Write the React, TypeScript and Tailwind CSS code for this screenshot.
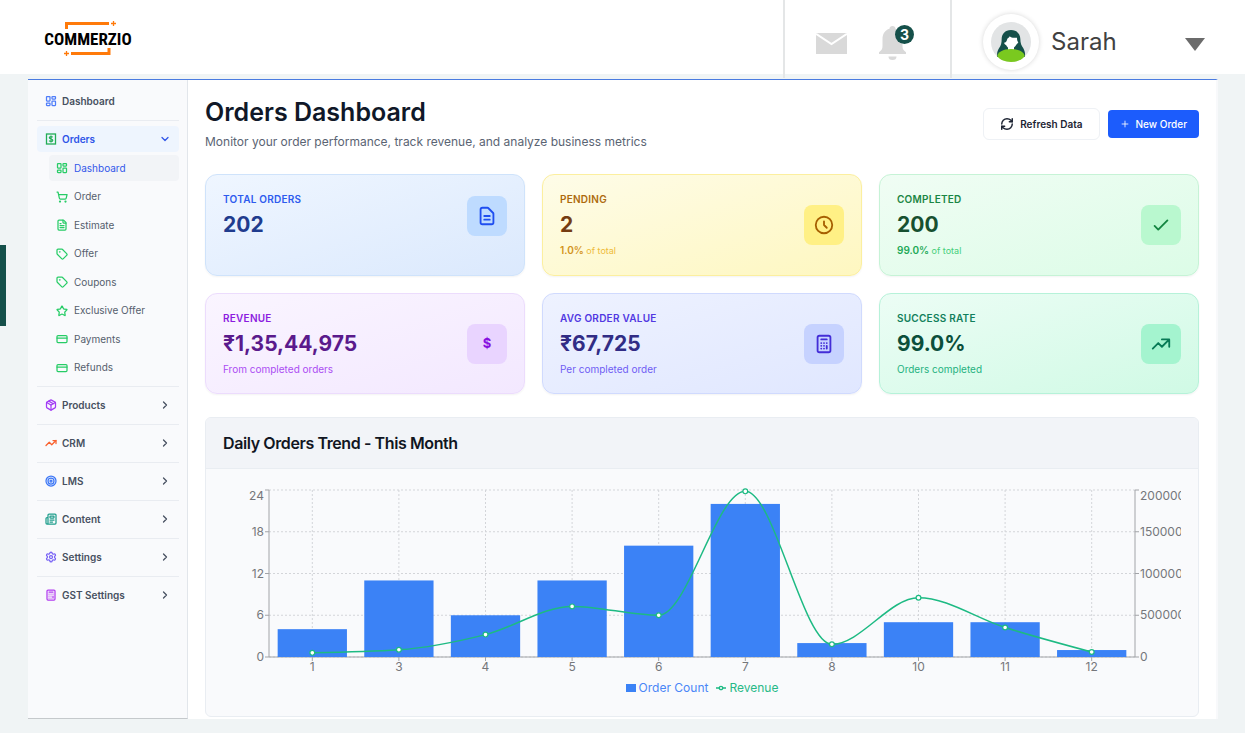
import React from "react";
import {
  Calculator,
  ChevronDown,
  ChevronRight,
  CreditCard,
  FileText,
  LayoutDashboard,
  Newspaper,
  Package,
  Plus,
  RefreshCw,
  Settings,
  ShoppingCart,
  Star,
  Tag,
  Target,
  TrendingUp,
} from "lucide-react";

type IconType = React.ComponentType<{ className?: string }>;

function DollarNote({ className }: { className?: string }) {
  return (
    <svg viewBox="0 0 24 24" className={className} fill="none" stroke="currentColor" aria-hidden="true">
      <rect x="3" y="2" width="18" height="20" strokeWidth="2.6" />
      <path d="M15.5 8.5c-.8-1-2-1.4-3.5-1.4-2 0-3.4.8-3.4 2.4 0 3.4 7 1.6 7 5 0 1.600-1.500 2.500-3.600 2.500-1.600 0-3-.5-3.800-1.600M12 5v14" strokeWidth="2.400" />
    </svg>
  );
}

const subItems: { label: string; icon: IconType; active?: boolean }[] = [
  { label: "Dashboard", icon: LayoutDashboard, active: true },
  { label: "Order", icon: ShoppingCart },
  { label: "Estimate", icon: FileText },
  { label: "Offer", icon: Tag },
  { label: "Coupons", icon: Tag },
  { label: "Exclusive Offer", icon: Star },
  { label: "Payments", icon: CreditCard },
  { label: "Refunds", icon: CreditCard },
];

const groups: { label: string; icon: IconType; color: string }[] = [
  { label: "Products", icon: Package, color: "text-[#a33df5]" },
  { label: "CRM", icon: TrendingUp, color: "text-[#f8602e]" },
  { label: "LMS", icon: Target, color: "text-[#3b76f6]" },
  { label: "Content", icon: Newspaper, color: "text-[#1f9e8c]" },
  { label: "Settings", icon: Settings, color: "text-[#7660f5]" },
  { label: "GST Settings", icon: Calculator, color: "text-[#b23bf0]" },
];

function Sidebar() {
  return (
    <aside className="w-40 shrink-0 border-r border-b border-r-[#e2e6eb] border-b-[#c5c9cc] bg-[#f9fafc] pt-[3px] pr-2 pl-[9px]">
      <nav aria-label="Main">
        <ul className="text-[10px] font-semibold text-[#475060]">
          <li className="border-b border-[#e9ecf1] pt-[5px] pb-[6px]">
            <a href="#dashboard" className="flex h-[26px] items-center gap-[5px] px-2">
              <LayoutDashboard className="size-3 stroke-[2.5] text-[#4f7df9]" />
              Dashboard
            </a>
          </li>
          <li className="border-b border-[#e9ecf1] pt-[5px] pb-[5px]">
            <button type="button" aria-expanded="true" className="flex h-[26px] w-full items-center gap-[5px] rounded bg-[#eef5fe] px-2 text-[#2f55e8]">
              <DollarNote className="size-3 text-[#22ad56]" />
              Orders
              <ChevronDown className="ml-auto size-3 stroke-[2.5]" />
            </button>
            <ul className="mt-[3px] flex h-[226px] flex-col justify-between pl-3 font-normal text-[#555e6d]">
              {subItems.map(({ label, icon: Icon, active }) => (
                <li key={label}>
                  <a
                    href={"#" + label}
                    className={
                      active
                        ? "flex h-[26px] items-center gap-[6px] rounded bg-[#f2f4f7] px-[7px] text-[#3358ea]"
                        : "flex h-[26px] items-center gap-[6px] px-[7px]"
                    }
                  >
                    <Icon className="size-3 stroke-[2.5] text-[#27cc66]" />
                    {label}
                  </a>
                </li>
              ))}
            </ul>
          </li>
          {groups.map(({ label, icon: Icon, color }, i) => (
            <li key={label} className={i < groups.length - 1 ? "border-b border-[#e9ecf1] pt-[5px] pb-[6px]" : "pt-[5px] pb-[6px]"}>
              <button type="button" aria-expanded="false" className="flex h-[26px] w-full items-center gap-[5px] px-2">
                <Icon className={"size-3 stroke-[2.5] " + color} />
                {label}
                <ChevronRight className="ml-auto size-3 stroke-[2.5]" />
              </button>
            </li>
          ))}
        </ul>
      </nav>
    </aside>
  );
}

function Logo() {
  return (
    <a href="#home" aria-label="Commerzio home" className="flex w-[88px] flex-col items-center pt-[21px]">
      <svg width="88" height="9" viewBox="0 0 88 9" fill="none" stroke="#ff7a0a" aria-hidden="true">
        <path d="M22.500 8V2.500H65" strokeWidth="3" />
        <path d="M69.500 0v5M67 2.500h5" strokeWidth="1.300" />
      </svg>
      <span className="text-[17px] leading-[18px] font-bold text-black [font-family:'Roboto_Condensed','Liberation_Sans_Narrow',Roboto,sans-serif]">
        COMMERZIO
      </span>
      <svg width="88" height="9" viewBox="0 0 88 9" fill="none" stroke="#ff7a0a" aria-hidden="true">
        <path d="M65 0V5.500H27" strokeWidth="3" />
        <path d="M22.500 3v5M20 5.500h5" strokeWidth="1.300" />
      </svg>
    </a>
  );
}

function TopBar() {
  return (
    <header className="flex h-[74px] items-start bg-white pl-11">
      <Logo />
      <div className="ml-auto flex h-[78px] w-[167px] items-start border-l-2 border-[#e4e6e7] pl-[31px]">
        <button type="button" aria-label="Messages" className="mt-[33px]">
          <svg width="31" height="21" viewBox="0 0 31 21" aria-hidden="true">
            <rect width="31" height="21" fill="#d9d9d9" />
            <path d="M0 .8 15.500 11 31 .8" fill="none" stroke="#fff" strokeWidth="2" />
          </svg>
        </button>
        <button type="button" aria-label="Notifications" className="relative mt-[26px] ml-8">
          <svg width="27" height="34" viewBox="0 0 27 34" fill="#d9d9d9" aria-hidden="true">
            <path d="M13.500 0a3 3 0 0 1 3 2.800C21 4 23.500 8 23.500 13v7c0 3 .8 4 3.500 6.200V28H0v-1.800C2.700 24 3.500 23 3.500 20v-7c0-5 2.500-9 7-10.200A3 3 0 0 1 13.500 0Z" />
            <path d="M9.500 30.500h8a4 3.500 0 0 1-8 0Z" />
          </svg>
          <span className="absolute -top-px left-4 flex size-[19px] items-center justify-center rounded-full bg-[#15504a] text-sm font-bold text-white">3</span>
        </button>
      </div>
      <button type="button" aria-haspopup="menu" className="flex h-[78px] w-[295px] items-start border-l-2 border-[#e4e6e7] pr-10 pl-[31px]">
        <span className="mt-[14px] flex size-[56px] items-center justify-center rounded-full bg-white shadow-[0_0_5px_rgba(0,0,0,0.16)]">
          <svg width="40" height="40" viewBox="0 0 120 120" aria-hidden="true">
            <circle cx="60" cy="60" r="60" fill="#e2e4e5" />
            <path d="M60 24c-18 0-28 12-28 27 0 12-2 20-8 28-5 8-7 16-5 26h82c3-10 0-18-4-26-6-8-9-16-9-28 0-15-10-27-28-27Z" fill="#15504a" />
            <path d="M39 62c5 0 9-5 10-12 4-2 6-4 7-7 6 6 15 4 22 4 0 7 1 11 4 14-2 5-6 5-8 10-1 3-5 3-5 6v12H51V77c-2-3-4-4-6-8-2-2-5-3-6-7Z" fill="#fff" />
            <path d="M60 81c24 0 41 10 41 22-8 11-24 17-41 17s-33-6-41-17c0-12 17-22 41-22Z" fill="#7ac91f" />
          </svg>
        </span>
        <span className="mt-[26px] ml-3 text-2xl leading-8 text-[#414141]">Sarah</span>
        <svg width="20" height="13" viewBox="0 0 20 13" className="mt-[38px] ml-auto" aria-hidden="true">
          <path d="M0 0h20L10 13Z" fill="#6b6b6b" />
        </svg>
      </button>
    </header>
  );
}

const outline = {
  document:
    "M9 12h6m-6 4h6m2 5H7a2 2 0 01-2-2V5a2 2 0 012-2h5.586a1 1 0 01.707.293l5.414 5.414a1 1 0 01.293.707V19a2 2 0 01-2 2z",
  clock: "M12 8v4l3 3m6-3a9 9 0 11-18 0 9 9 0 0118 0z",
  check: "M5 13l4 4L19 7",
  calculator:
    "M9 7h6m0 10v-3m-3 3h.01M9 17h.01M9 14h.01M12 14h.01M15 11h.01M12 11h.01M9 11h.01M7 21h10a2 2 0 002-2V5a2 2 0 00-2-2H7a2 2 0 00-2 2v14a2 2 0 002 2z",
  trend: "M13 7h8m0 0v8m0-8l-8 8-4-4-6 6",
};

interface Stat {
  label: string;
  value: string;
  share?: string;
  note?: string;
  icon?: string;
  card: string;
  labelColor: string;
  valueColor: string;
  shareColor?: string;
  noteColor?: string;
  badge: string;
}

const stats: Stat[] = [
  {
    label: "TOTAL ORDERS",
    value: "202",
    icon: outline.document,
    card: "border-[#cfe3fb] from-[#eff6ff] to-[#dbe9fd]",
    labelColor: "text-[#2d5bee]",
    valueColor: "text-[#1f3c8e]",
    badge: "bg-[#bedbff] text-[#1f4ef0]",
  },
  {
    label: "PENDING",
    value: "2",
    share: "1.0%",
    note: "of total",
    icon: outline.clock,
    card: "border-[#fcef9f] from-[#fefce8] to-[#fef7c0]",
    labelColor: "text-[#ad6a0c]",
    valueColor: "text-[#753c12]",
    shareColor: "text-[#d3931b]",
    noteColor: "text-[#eebb3a]",
    badge: "bg-[#fff085] text-[#a65f00]",
  },
  {
    label: "COMPLETED",
    value: "200",
    share: "99.0%",
    note: "of total",
    icon: outline.check,
    card: "border-[#c6f3d6] from-[#f0fdf4] to-[#dcfce7]",
    labelColor: "text-[#1b8644]",
    valueColor: "text-[#175030]",
    shareColor: "text-[#22a957]",
    noteColor: "text-[#45cf7a]",
    badge: "bg-[#b9f8cf] text-[#138540]",
  },
  {
    label: "REVENUE",
    value: "₹1,35,44,975",
    note: "From completed orders",
    card: "border-[#ecdcfd] from-[#faf5ff] to-[#f3e8ff]",
    labelColor: "text-[#8c1cdf]",
    valueColor: "text-[#5a1a8c]",
    noteColor: "text-[#ab4df3]",
    badge: "bg-[#e9d4ff] text-[#8710e0]",
  },
  {
    label: "AVG ORDER VALUE",
    value: "₹67,725",
    note: "Per completed order",
    icon: outline.calculator,
    card: "border-[#d0dafe] from-[#eef2ff] to-[#e0e7ff]",
    labelColor: "text-[#5138e2]",
    valueColor: "text-[#312c85]",
    noteColor: "text-[#6f5df4]",
    badge: "bg-[#c6d2ff] text-[#432dd7]",
  },
  {
    label: "SUCCESS RATE",
    value: "99.0%",
    note: "Orders completed",
    icon: outline.trend,
    card: "border-[#b6f2d9] from-[#ecfdf5] to-[#d0fae5]",
    labelColor: "text-[#11805c]",
    valueColor: "text-[#0b4f3b]",
    noteColor: "text-[#25b280]",
    badge: "bg-[#a4f4cf] text-[#087a56]",
  },
];

function StatCard({ stat }: { stat: Stat }) {
  return (
    <section className={"rounded-xl border bg-linear-to-br p-[17px] shadow-xs " + stat.card}>
      <div className="flex items-center justify-between">
        <div>
          <h2 className={"text-[10px] leading-[14px] font-semibold tracking-wide " + stat.labelColor}>{stat.label}</h2>
          <p className={"mt-[5px] text-[21px] leading-7 font-bold " + stat.valueColor}>{stat.value}</p>
          {stat.note && (
            <p className={"mt-1 text-[10px] leading-[14px] " + stat.noteColor}>
              {stat.share && <span className={"font-semibold " + stat.shareColor}>{stat.share} </span>}
              {stat.share ? <span className="text-[9px]">{stat.note}</span> : stat.note}
            </p>
          )}
        </div>
        <div className={"flex size-10 items-center justify-center rounded-lg " + stat.badge}>
          {stat.icon ? (
            <svg viewBox="0 0 24 24" className="size-[22px]" fill="none" stroke="currentColor" strokeWidth="2" strokeLinecap="round" strokeLinejoin="round" aria-hidden="true">
              <path d={stat.icon} />
            </svg>
          ) : (
            <span className="text-[13px] font-bold">$</span>
          )}
        </div>
      </div>
    </section>
  );
}

const days = [
  { day: 1, orders: 4, revenue: 50000 },
  { day: 3, orders: 11, revenue: 86000 },
  { day: 4, orders: 6, revenue: 268000 },
  { day: 5, orders: 11, revenue: 606000 },
  { day: 6, orders: 16, revenue: 500000 },
  { day: 7, orders: 22, revenue: 1984000 },
  { day: 8, orders: 2, revenue: 152000 },
  { day: 10, orders: 5, revenue: 710000 },
  { day: 11, orders: 5, revenue: 353000 },
  { day: 12, orders: 1, revenue: 60000 },
];

const LEFT = 46;
const RIGHT = 912;
const TOP = 4;
const BOTTOM = 171;
const BAND = (RIGHT - LEFT) / days.length;
const points = days.map((d, i) => ({
  x: LEFT + BAND * (i + 0.5),
  y: BOTTOM - (d.revenue / 2000000) * (BOTTOM - TOP),
}));

// Monotone cubic interpolation: the curve never overshoots its data points.
function monotonePath(p: { x: number; y: number }[]) {
  const n = p.length;
  const slopes = p.slice(1).map((q, i) => (q.y - p[i].y) / (q.x - p[i].x));
  const tangents = p.map((_, i) => {
    if (i === 0 || i === n - 1) return 0;
    const a = slopes[i - 1];
    const b = slopes[i];
    return (Math.sign(a) + Math.sign(b)) * Math.min(Math.abs(a), Math.abs(b), 0.5 * Math.abs((a + b) / 2));
  });
  tangents[0] = (3 * slopes[0] - tangents[1]) / 2;
  tangents[n - 1] = (3 * slopes[n - 2] - tangents[n - 2]) / 2;
  let d = `M${p[0].x},${p[0].y}`;
  for (let i = 0; i < n - 1; i++) {
    const h = (p[i + 1].x - p[i].x) / 3;
    d += `C${p[i].x + h},${p[i].y + h * tangents[i]} ${p[i + 1].x - h},${p[i + 1].y - h * tangents[i + 1]} ${p[i + 1].x},${p[i + 1].y}`;
  }
  return d;
}

function TrendChart() {
  const levels = [0, 1, 2, 3, 4];
  return (
    <svg viewBox="0 0 958 188" className="block w-full overflow-hidden" role="img" aria-label="Daily order count and revenue">
      <g stroke="#d3d5d9" strokeDasharray="2 2">
        {levels.map((l) => {
          const y = BOTTOM - ((BOTTOM - TOP) * l) / 4;
          return <line key={l} x1={LEFT} x2={RIGHT} y1={y} y2={y} />;
        })}
        {points.map((p) => (
          <line key={p.x} x1={p.x} x2={p.x} y1={TOP} y2={BOTTOM} />
        ))}
      </g>
      <path d={`M${LEFT} ${TOP}V${BOTTOM}H${RIGHT}V${TOP}`} fill="none" stroke="#a2a4a8" />
      <g stroke="#a2a4a8">
        {levels.map((l) => {
          const y = BOTTOM - ((BOTTOM - TOP) * l) / 4;
          return <path key={l} d={`M${LEFT - 4} ${y}h4M${RIGHT} ${y}h4`} />;
        })}
        {points.map((p) => (
          <path key={p.x} d={`M${p.x} ${BOTTOM}v4`} />
        ))}
      </g>
      <g fill="#3b82f6">
        {days.map((d, i) => {
          const h = (d.orders / 24) * (BOTTOM - TOP);
          return <rect key={d.day} x={points[i].x - BAND * 0.4} y={BOTTOM - h} width={BAND * 0.8} height={h} />;
        })}
      </g>
      <path d={monotonePath(points)} fill="none" stroke="#1dba83" strokeWidth="1.5" />
      <g fill="#fff" stroke="#1dba83" strokeWidth="1.2">
        {points.map((p) => (
          <circle key={p.x} cx={p.x} cy={p.y} r="2.4" />
        ))}
      </g>
      <g fill="#75777b" fontSize="12">
        {levels.map((l) => {
          const y = l === 4 ? TOP + 10 : BOTTOM - ((BOTTOM - TOP) * l) / 4 + 4;
          return (
            <React.Fragment key={l}>
              <text x={LEFT - 5} y={y} textAnchor="end">{l * 6}</text>
              <text x={RIGHT + 5} y={y}>{l * 500000}</text>
            </React.Fragment>
          );
        })}
        {days.map((d, i) => (
          <text key={d.day} x={points[i].x} y={BOTTOM + 14} textAnchor="middle">{d.day}</text>
        ))}
      </g>
    </svg>
  );
}

export default function App() {
  return (
    <div className="relative min-h-screen bg-[#f0f4f5] pb-[13px] font-['Inter','Noto_Sans',sans-serif]">
      <TopBar />
      <div className="absolute top-[245px] left-0 h-[81px] w-[6px] bg-[#15504a]" />
      <div className="mt-[5px] mr-[27px] ml-7 flex border-t border-t-[#4a7be0] border-r-2 border-r-[#f8f9fb] bg-white">
        <Sidebar />
        <main className="min-w-0 flex-1 px-[17px] pt-4 pb-[2px]">
          <div className="flex items-center justify-between">
            <div>
              <h1 className="text-[25px] leading-8 font-semibold text-[#101828]">Orders Dashboard</h1>
              <p className="mt-1 text-xs leading-5 text-[#5a6473]">
                Monitor your order performance, track revenue, and analyze business metrics
              </p>
            </div>
            <div className="flex items-center gap-2 text-[10px] font-semibold">
              <button type="button" className="flex h-8 items-center gap-[6px] rounded-md border border-[#eef1f5] bg-white px-4 text-[#1d2433]">
                <RefreshCw className="size-[14px] stroke-[2.5]" />
                Refresh Data
              </button>
              <button type="button" className="flex h-7 items-center gap-[6px] rounded bg-[#1c5cfc] px-3 font-medium text-white">
                <Plus className="size-[10px]" />
                New Order
              </button>
            </div>
          </div>
          <div className="mt-[22px] grid grid-cols-3 gap-x-[17px] gap-y-[17px]">
            {stats.map((s) => (
              <StatCard key={s.label} stat={s} />
            ))}
          </div>
          <section className="mt-[23px] overflow-hidden rounded-md border border-[#e9edf2] bg-[#f9fafc]">
            <h2 className="border-b border-[#e9edf2] bg-[#f2f4f8] px-[17px] py-[13px] text-base leading-6 font-semibold tracking-tight text-[#111622]">
              Daily Orders Trend - This Month
            </h2>
            <div className="px-[17px] pt-[17px] pb-[18px]">
              <TrendChart />
              <ul className="mt-1 flex items-center justify-center gap-2 text-xs leading-5">
                <li className="flex items-center gap-[3px] text-[#4a86f7]">
                  <span className="h-2 w-[10px] bg-[#3b82f6]" />
                  Order Count
                </li>
                <li className="flex items-center gap-[3px] text-[#27b987]">
                  <svg width="10" height="8" viewBox="0 0 10 8" fill="none" stroke="#1dba83" strokeWidth="1.300" aria-hidden="true">
                    <path d="M0 4h3M7 4h3" />
                    <circle cx="5" cy="4" r="1.700" />
                  </svg>
                  Revenue
                </li>
              </ul>
            </div>
          </section>
        </main>
      </div>
    </div>
  );
}
